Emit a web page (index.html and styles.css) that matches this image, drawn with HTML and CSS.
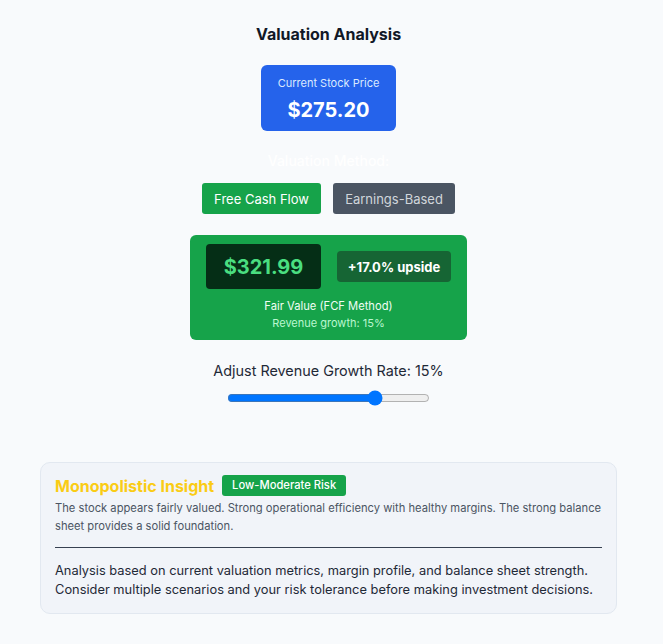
FILE: index.html
```html
<!DOCTYPE html>
<html>
<head>
<meta charset="utf-8">
<link rel="stylesheet" href="styles.css">
</head>
<body>
<div class="page">
  <h2 class="title">Valuation Analysis</h2>
  <div class="price-box">
    <div class="price-label">Current Stock Price</div>
    <div class="price-value">$275.20</div>
  </div>
  <div class="method-label">Valuation Method:</div>
  <div class="methods">
    <button class="btn btn-active">Free Cash Flow</button>
    <button class="btn btn-inactive">Earnings-Based</button>
  </div>
  <div class="fair-card">
    <div class="fair-row">
      <div class="fair-value">$321.99</div>
      <div class="upside">+17.0% upside</div>
    </div>
    <div class="fair-label">Fair Value (FCF Method)</div>
    <div class="fair-sub">Revenue growth: 15%</div>
  </div>
  <div class="slider-block">
    <label class="slider-label">Adjust Revenue Growth Rate: 15%</label>
    <input class="slider" type="range" min="0" max="20" value="15">
  </div>
  <div class="insight">
    <div class="insight-head">
      <span class="insight-title">Monopolistic Insight</span>
      <span class="risk">Low-Moderate Risk</span>
    </div>
    <p class="insight-text">The stock appears fairly valued. Strong operational efficiency with healthy margins. The strong balance sheet provides a solid foundation.</p>
    <hr class="divider">
    <p class="insight-foot">Analysis based on current valuation metrics, margin profile, and balance sheet strength. Consider multiple scenarios and your risk tolerance before making investment decisions.</p>
  </div>
</div>
</body>
</html>
```
FILE: styles.css
```css
* { box-sizing: border-box; }
html, body { margin: 0; padding: 0; }
body {
  background: #f8fafc;
  font-family: Inter, "Noto Sans", sans-serif;
  color: #1f2937;
}
.page {
  display: flex;
  flex-direction: column;
  align-items: center;
  padding: 24px 46px 32px 40px;
}
.title {
  margin: 0;
  font-size: 16px;
  font-weight: 700;
  color: #111827;
  line-height: 20px;
}
.price-box {
  margin-top: 21px;
  width: 135px;
  height: 66px;
  background: #2563eb;
  border-radius: 6px;
  color: #fff;
  display: flex;
  flex-direction: column;
  align-items: center;
  padding-top: 11px;
}
.price-label {
  font-size: 11px;
  line-height: 14px;
  color: #dbeafe;
}
.price-value {
  margin-top: 7px;
  font-size: 20px;
  font-weight: 700;
  line-height: 26px;
}
.method-label {
  margin-top: 20px;
  font-size: 14px;
  font-weight: 500;
  color: #ffffff;
  line-height: 20px;
}
.methods {
  margin-top: 12px;
  display: flex;
  gap: 12px;
}
.btn {
  font-family: Inter, "Noto Sans", sans-serif;
  font-size: 13px;
  height: 31px;
  padding: 0 10px;
  border: none;
  border-radius: 3px;
}
.btn-active { background: #16a34a; color: #ffffff; width: 119px; }
.btn-inactive { background: #4b5563; color: #d1d5db; width: 122px; }
.fair-card {
  margin-top: 21px;
  width: 277px;
  height: 105px;
  background: #16a34a;
  border-radius: 6px;
  padding: 9px 16px 0 16px;
  display: flex;
  flex-direction: column;
  align-items: center;
}
.fair-row {
  display: flex;
  align-items: center;
  gap: 16px;
  width: 100%;
}
.fair-value {
  width: 115px;
  height: 45px;
  background: #052e16;
  border-radius: 4px;
  color: #4ade80;
  font-size: 20px;
  font-weight: 700;
  display: flex;
  align-items: center;
  justify-content: center;
}
.upside {
  width: 114px;
  height: 31px;
  background: #166534;
  border-radius: 4px;
  color: #ffffff;
  font-size: 13px;
  font-weight: 700;
  display: flex;
  align-items: center;
  justify-content: center;
}
.fair-label {
  margin-top: 9px;
  font-size: 11.2px;
  line-height: 16px;
  color: #f0fdf4;
}
.fair-sub {
  margin-top: 1px;
  font-size: 11px;
  line-height: 16px;
  color: #bbf7d0;
}
.slider-block {
  margin-top: 21px;
  display: flex;
  flex-direction: column;
  align-items: center;
}
.slider-label {
  font-size: 14.4px;
  line-height: 20px;
  color: #1f2937;
}
.slider {
  margin-top: 9px;
  width: 203px;
}
.insight {
  margin-top: 54px;
  width: 577px;
  background: #f1f4f9;
  border: 1px solid #e2e8f0;
  border-radius: 10px;
  padding: 12px 14px 14px 14px;
}
.insight-head {
  display: flex;
  align-items: center;
  gap: 8px;
}
.insight-title {
  font-size: 16px;
  font-weight: 700;
  color: #facc15;
  line-height: 20px;
}
.risk {
  background: #16a34a;
  color: #ffffff;
  font-size: 11.2px;
  font-weight: 500;
  padding: 0 10px;
  height: 21px;
  line-height: 21px;
  border-radius: 3px;
}
.insight-text {
  margin: 3px 0 0 0;
  font-size: 11.2px;
  line-height: 18px;
  color: #4b5563;
}
.divider {
  margin: 12px 0 0 0;
  border: none;
  border-top: 1px solid #374151;
}
.insight-foot {
  margin: 13px 0 0 0;
  font-size: 12.85px;
  line-height: 19px;
  color: #1f2937;
}
```
